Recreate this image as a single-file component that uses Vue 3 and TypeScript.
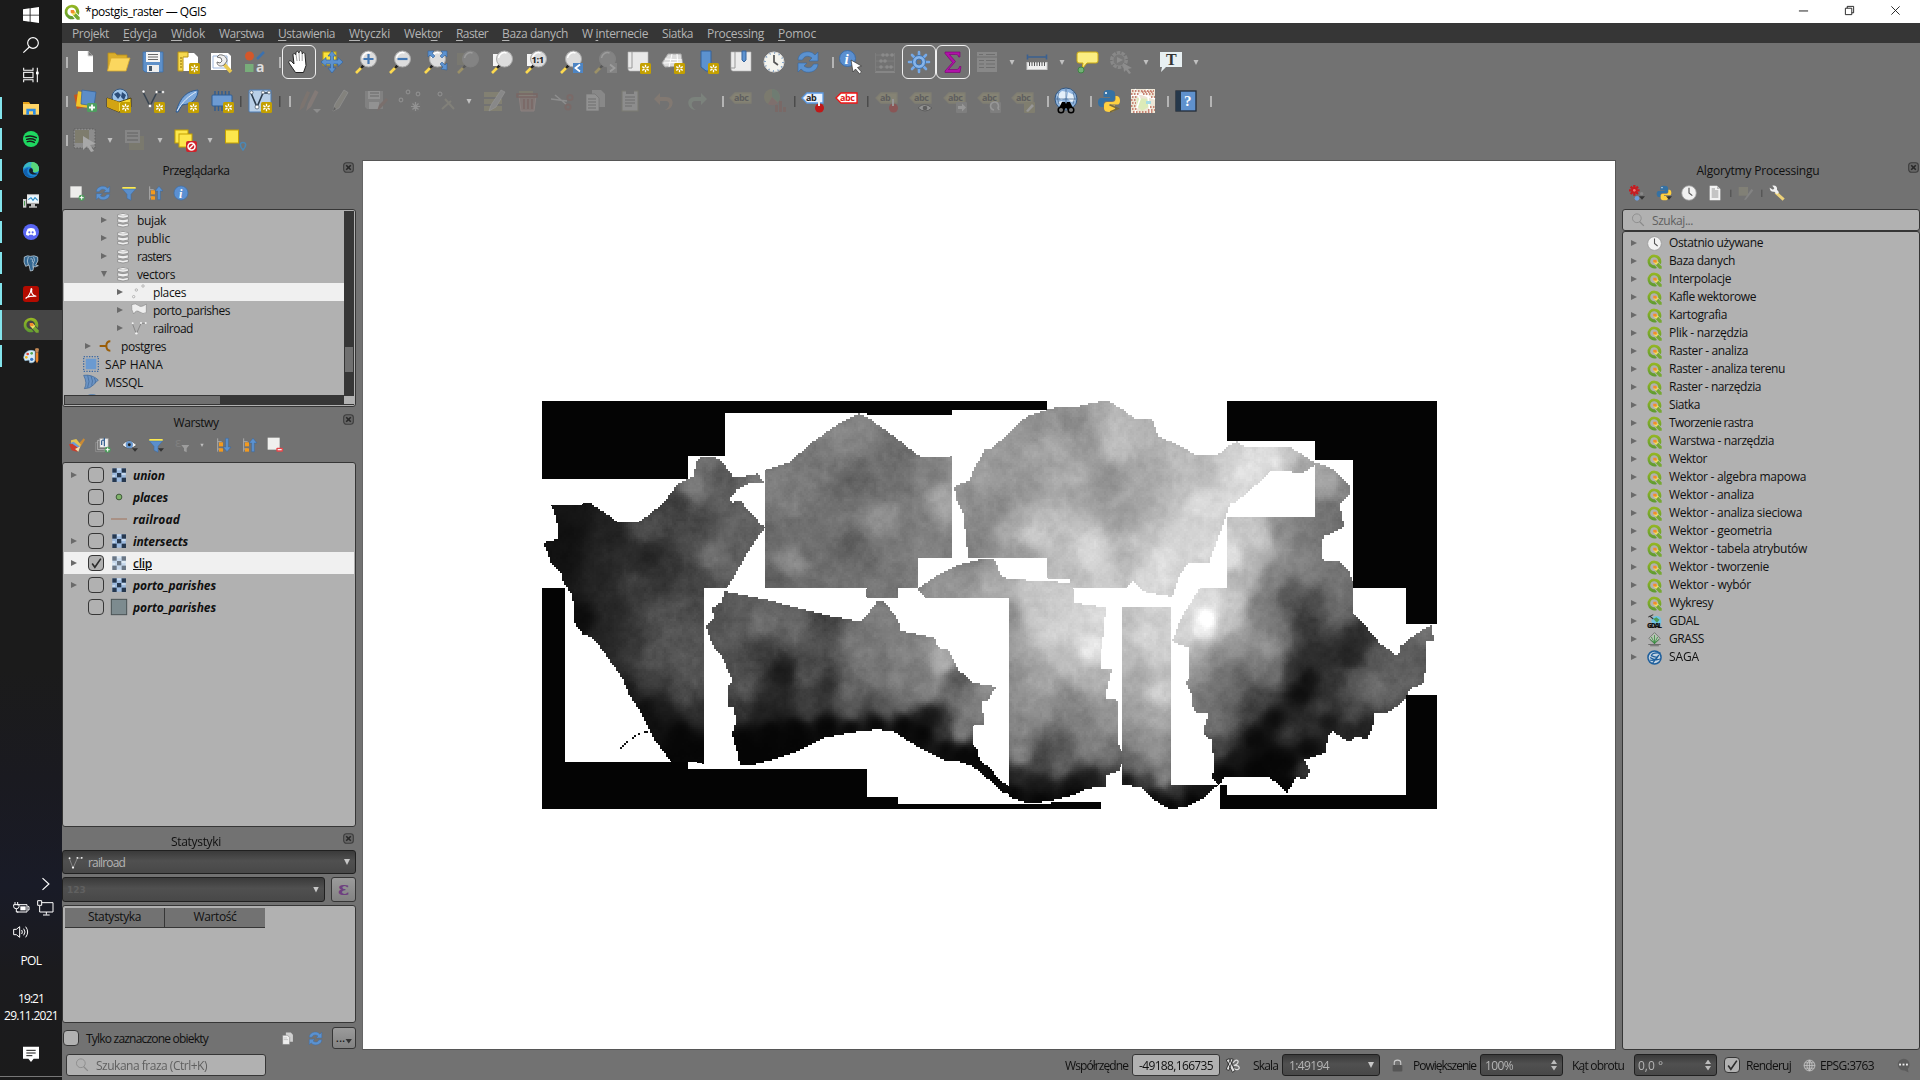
<script setup lang="ts">
import { onMounted, ref } from 'vue'
import type { Directive } from 'vue'

/* Tightens or loosens tracking so that a label takes the given width */
const vFit: Directive<HTMLElement, number> = {
  mounted(el, { value }) {
    const chars = (el.textContent || '').trim().length
    if (!value || !chars) return
    const natural = el.getBoundingClientRect().width
    el.style.letterSpacing = `${((value - natural) / chars).toFixed(3)}px`
  },
}

/* ---------- icons ---------- */
const star = (x = 13, y = 13) =>
  `<g transform="translate(${x} ${y})"><rect width="11" height="11" rx="1.5" fill="#c4a000"/><g stroke="#fff" stroke-width="1.3"><path d="M5.5 1.8v7.4M2.2 3.6l6.6 3.8M8.8 3.6L2.2 7.4"/></g><circle cx="5.5" cy="5.5" r="1.3" fill="#c4a000"/></g>`
const lens = (inner = '', fill = '#dcdcdc') =>
  `<path d="M2 23l5.5-5.5" stroke="#fcd94f" stroke-width="2.6"/><path d="M7 18l2.6-2.6" stroke="#222" stroke-width="2.4"/><circle cx="14.5" cy="9" r="8" fill="${fill}" stroke="#a9a9a9" stroke-width="1"/><path d="M8.5 8a6 6 0 0 1 8-5" stroke="#fff" stroke-width="1.5" fill="none"/>${inner}`
const sync =
  '<path d="M2 10C2 4 9 0 16 2.500L19 5l3-3v9h-9l3-3c-4-3-8-2-9.500 2z" fill="#5b92d0" stroke="#3566a0" stroke-width=".6"/><path d="M22 14c0 6-7 10-14 7.500L5 19l-3 3v-9h9l-3 3c4 3 8 2 9.500-2z" fill="#5b92d0" stroke="#3566a0" stroke-width=".6"/>'
const tag = (t: string, fill: string, line: string, col: string) =>
  `<path d="M1 9l5-5h16v10H6z" fill="${fill}" stroke="${line}" stroke-width="1.3"/><text x="5" y="12" font-family="Open Sans, sans-serif" font-weight="700" font-size="9" letter-spacing="-.4" fill="${col}">${t}</text>`
const pin = '<circle cx="18.500" cy="19" r="4.500" fill="#c01818"/><path d="M18 17V10" stroke="#eee" stroke-width="2"/>'
const python =
  '<path d="M12 1c-5 0-5.500 2-5.500 4v3H13v1H4C1.500 9 1 11.500 1 13.500S2 18 4 18h2.500v-3c0-2 1.500-3 3.500-3h5c2 0 3-1.500 3-3V5c0-3-2-4-6-4z" fill="#3571a3"/><path d="M12.500 23c5 0 5.500-2 5.500-4v-2.500h-6v-1h8.500c2 0 2.500-2 2.500-4S22 7 20 7h-1.500v3c0 2-1.500 3-3.500 3h-5c-2 0-3 1.500-3 3v3.500c0 2.500 2 3.500 5.500 3.500z" fill="#ffd040"/><circle cx="9" cy="4" r="1" fill="#fff"/>'
const funnel = '<path d="M2 3h20v3H2z" fill="#fce94f"/><path d="M2 6h20l-7 8v9l-6-3v-6z" fill="#5b8fcb" stroke="#3d6ca5" stroke-width=".8"/>'
const tri = '<path d="M15 17h9l-4.500 5z" fill="#333"/>'
const tree =
  '<path d="M4 2v20M4 7h6M4 18h6" stroke="#aaa" stroke-width="1.500" fill="none"/><rect x="6" y="8" width="6" height="6" fill="#f39a1e"/><rect x="6" y="17" width="6" height="5" fill="#f39a1e"/>'
const clock =
  '<circle cx="12" cy="12" r="11" fill="#f1f1f1" stroke="#9a9a9a" stroke-width="1.300"/><path d="M12 4v8l5 4" fill="none" stroke="#555" stroke-width="1.700"/>'
const qgis =
  '<defs><linearGradient id="qg" x1="0" y1="0" x2="0" y2="1"><stop offset="0" stop-color="#98b822"/><stop offset="1" stop-color="#5c9a32"/></linearGradient></defs><path d="M12 1a11 11 0 1 0 4 21.200L12.500 18A6.500 6.500 0 1 1 18 12.500l4 4A11 11 0 0 0 12 1z" fill="url(#qg)"/><path d="M14 13l3.500.500L23.500 20v3.500h-4L13.500 17z" fill="#76a832"/><path d="M10.500 9.500h4l4 4-4 4-4-4z" fill="#f0e064"/><path d="M10 9h5l1 4-2 1-4-1z" fill="#f08c2e"/>'
const rasterIcon = (a: string, b: string, c: string) => {
  let s = `<rect x="2" y="2" width="20" height="20" fill="${b}"/>`
  const dark = ['0,0', '1,1', '2,0', '0,2', '2,2']
  dark.forEach((d) => {
    const [x, y] = d.split(',').map(Number)
    s += `<rect x="${2 + x * 7}" y="${2 + y * 7}" width="6.500" height="6.500" fill="${a}"/>`
  })
  return s + `<path d="M9 2h6v3H9zM2 12h4v3H2zM16 9h6v3h-6z" fill="${c}"/>`
}

const icons: Record<string, string> = {
  sep: '<rect x="1" y="7" width="2" height="11" fill="#b4b4b4"/>',
  sepd: '<rect x="1" y="7" width="1.500" height="11" fill="#4b4b4b"/>',
  arrow: '<path d="M1.500 10h5L4 15z" fill="#c0c0c0"/>',
  newfile: '<path d="M5 1h10l5 5v16H5z" fill="#fff"/><path d="M15 1l5 5h-5z" fill="#777"/><path d="M15 1v5h5" fill="none" stroke="#ddd"/>',
  open: '<path d="M2 21V3h7l2 2h10v4" fill="#d9ae2b" stroke="#b88d1a" stroke-width=".800"/><path d="M1.500 21L5 8h19l-4 13z" fill="#fbd75f" stroke="#d8a92d" stroke-width=".800"/>',
  save: '<path d="M2 2h20v20H4l-2-2z" fill="#5e90c9" stroke="#3e6fa9" stroke-width=".800"/><rect x="5" y="2" width="14" height="10" fill="#f4f4f4"/><path d="M7 4.500h10M7 7h10M7 9.500h10" stroke="#666" stroke-width="1.200"/><rect x="6" y="15" width="12" height="7" fill="#eee"/><rect x="8" y="16" width="3" height="5" fill="#456"/>',
  layout: `<path d="M4 3h14l4 4v14H4z" fill="#fff"/><path d="M2 2h10v5H7v14H2z" fill="#f6d94e" stroke="#b99312"/><path d="M4 8h2M4 11h2M4 14h2M4 17h2" stroke="#8a6c08"/>${star()}`,
  layouts: '<path d="M1 3h17l3 3v14H1z" fill="#fff"/><path d="M3 6h14v12H3z" fill="none" stroke="#9db7dd"/><path d="M12 12l9 10" stroke="#e9c84e" stroke-width="3.500"/><path d="M7 7l4 1 1 3-2 2-3-1c0 4 4 5 7 3l3-4c0-4-4-7-8-6z" fill="#eee" stroke="#666" stroke-width=".900"/>',
  style: '<circle cx="6.500" cy="6" r="4.500" fill="#d4572a"/><path d="M14 9l7-7" stroke="#3c71ae" stroke-width="2.500"/><rect x="2" y="14" width="8.500" height="8" fill="#78ad7a"/><text x="13" y="22" font-family="Open Sans, sans-serif" font-weight="700" font-size="14" fill="#ddd">a</text>',
  hand: '<path d="M8.500 22.500L2 13c-1-2 1-3 2.500-1.500L7 14 6 5c0-2 2.300-2 2.500 0L9 3c0-2.500 2.800-2 2.800 0l.400-1c.500-2 2.800-1.500 2.800.500l.300 1.500c.500-2 2.700-1.500 2.700.500l1 11-2.500 7z" fill="#fff" stroke="#222" stroke-width="1"/><path d="M9 4l1 7M12 3l.500 8M15.200 4v7" stroke="#888" stroke-width=".800"/>',
  pan: '<rect x="3" y="2" width="13" height="13" fill="#fbe33c" stroke="#bd9d0b"/><path d="M12 1l4 5h-2.500v4H18V7.500l5 4.500-5 4.500V14h-4.500v4H16l-4 5-4-5h2.500v-4H6v2.500L1 12l5-4.500V10h4.500V6H8z" fill="#5c92d0" stroke="#34639b" stroke-width=".700"/>',
  zin: lens('<path d="M14.500 4v10M9.500 9h10" stroke="#4478b4" stroke-width="2.200"/>'),
  zout: lens('<path d="M9.500 9h10" stroke="#4478b4" stroke-width="2.200"/>'),
  zfull: lens('<path d="M5 1h6l-2 2 3 3-2 2-3-3-2 2zM24 1h-6l2 2-3 3 2 2 3-3 2 2zM24 20v-7l-2 2-3-3-2 2 3 3-2 2z" fill="#5c92d0" stroke="#34639b" stroke-width=".600"/>'),
  zsel: '<rect x="1" y="3" width="10" height="12" fill="#8c876c"/>' + lens('', '#aaa'),
  zlay: '<path d="M3 4h8v12H3z" fill="#f5f5f5"/>' + lens(),
  znat: '<path d="M3 4h8v12H3z" fill="#f5f5f5"/>' + lens('<text x="7.500" y="12.500" font-family="Open Sans, sans-serif" font-weight="700" font-size="9.500" letter-spacing="-.5" fill="#222">1:1</text>'),
  zlast: lens('<rect x="14" y="13" width="10" height="10" fill="#4d85c4"/><path d="M21 14.500l-4.500 3.500 4.500 3.500" stroke="#fff" stroke-width="1.800" fill="none"/>'),
  znext: lens('<rect x="14" y="13" width="10" height="10" fill="#aaa"/><path d="M17 14.500l4.500 3.500-4.500 3.500" stroke="#fff" stroke-width="1.800" fill="none"/>', '#aaa'),
  newmap: `<path d="M1 2h20v19H3c-2 0-2-3-2-3z" fill="#e9e9e9" stroke="#bbb" stroke-width=".600"/><path d="M5 2v16H1" fill="none" stroke="#999"/>${star()}`,
  new3d: `<path d="M7 4h13l2 12-18 1-3-4z" fill="#dcdcdc" stroke="#aaa"/><path d="M4 9l17 1M3 13l18-1M11 4L8 17M16 4l1 12" stroke="#fff"/>${star()}`,
  bookmark: `<path d="M6 1h10v20h-5l-5-4z" fill="#5c92d0" stroke="#34639b"/>${star()}`,
  bookmarks: '<path d="M2 2h20v19H4c-2 0-2-3-2-3z" fill="#ececec" stroke="#bbb" stroke-width=".600"/><path d="M6 2v16H2" fill="none" stroke="#999"/><path d="M13 1h4v9l-2 2-2-2z" fill="#5c92d0" stroke="#34639b"/>',
  clock: '<circle cx="12" cy="12" r="10" fill="#f4f4ee" stroke="#d8d8d8"/><circle cx="12" cy="12" r="9" fill="none" stroke="#678fbc" stroke-width="1.500" stroke-dasharray="1 3.700"/><path d="M12 5v7l4 3" fill="none" stroke="#555" stroke-width="1.700"/>',
  sync,
  info: '<circle cx="8.500" cy="8.500" r="8" fill="#5b8fd0" stroke="#3d6ca5"/><text x="5.500" y="14" font-family="Liberation Serif, serif" font-style="italic" font-weight="700" font-size="15" fill="#fff">i</text><path d="M12 10l10.500 6-4 1.500 4 4.500-2 1.800-4-4.800-2.500 3z" fill="#fff" stroke="#333" stroke-width=".700"/>',
  abacus: '<path d="M2 22h20" stroke="#ccc" stroke-width="1.500"/><path d="M3 5h18M3 11h18M3 17h18M2.500 3v19M21.500 3v19" stroke="#999" stroke-width="1"/><g fill="#c4c4c4"><circle cx="10" cy="5" r="1.800"/><circle cx="14" cy="5" r="1.800"/><circle cx="19" cy="5" r="1.800"/><circle cx="8" cy="11" r="1.800"/><circle cx="12" cy="11" r="1.800"/><circle cx="8" cy="17" r="1.800"/><circle cx="14" cy="17" r="1.800"/><circle cx="18" cy="17" r="1.800"/></g>',
  gear: '<g stroke="#75a9e8" stroke-width="2.600" stroke-linecap="round"><path d="M12 2v20M2 12h20M5 5l14 14M19 5L5 19"/></g><circle cx="12" cy="12" r="6.500" fill="#86b4ea" stroke="#3e74b4"/><circle cx="12" cy="12" r="3" fill="#727272" stroke="#3e74b4"/>',
  sigma: '<path d="M4 2h15v5h-1.500c0-2-1-2.500-3-2.500H8.500l6 7-7 8H15c2 0 3-.500 3.500-3H20l-1 6H4v-1.500l7.500-8.500L4 3.500z" fill="#b012a8" stroke="#77006f" stroke-width=".600"/>',
  table: '<rect x="2" y="2" width="20" height="20" fill="#bbb"/><path d="M2 7h20M4 10.500h5M11 10.500h9M4 14h5M11 14h9M4 17.500h5M11 17.500h9M4 4.500h4M11 4.500h9" stroke="#666" stroke-width="1.200"/>',
  ruler: '<path d="M2.500 7h19M2.500 4.500v5M21.500 4.500v5" stroke="#3a6090" stroke-width="1.600"/><rect x="2" y="12.500" width="20" height="7" fill="#f0f0f0" stroke="#ccc"/><path d="M4.500 12v4M7 12v4M9.500 12v4M12 12v4M14.500 12v4M17 12v4M19.500 12v4" stroke="#555"/>',
  tip: '<path d="M4 2h17q2 0 2 2v7q0 2-2 2H12l-5 6 1-6H4q-2 0-2-2V4q0-2 2-2z" fill="#fbee82" stroke="#cbaa10"/><circle cx="6" cy="20" r="3" fill="#72b276" stroke="#3e8543"/>',
  action: '<circle cx="10" cy="10" r="7.500" fill="none" stroke="#bbb" stroke-width="3" stroke-dasharray="3.500 1.200"/><circle cx="10" cy="10" r="6" fill="#888" stroke="#bbb"/><path d="M8 7l6 3-6 3z" fill="#ccc"/><path d="M14 13l9 5-4 1 3 4-2 1-3-4-2 2z" fill="#ccc"/>',
  textnote: '<path d="M1 2h22v15H7l-5 5 1-5H1z" fill="#e8f0f2"/><text x="7" y="15" font-family="Liberation Serif, serif" font-weight="700" font-size="16" fill="#333">T</text>',
  addlay: '<path d="M1 6l11-3 3 14-11 3z" fill="#c6561d"/><path d="M4 3h11v15H4z" fill="#f0c52b" transform="rotate(8 9 10)"/><path d="M9 1l14 2-2 14L8 15z" fill="#5c8dc8" stroke="#34639b" stroke-width=".700"/><rect x="14" y="14" width="10" height="9" rx="1.500" fill="#4f9e60"/><path d="M19 15.500v6M16 18.500h6" stroke="#fff" stroke-width="1.800"/>',
  geopkg: `<circle cx="13" cy="8" r="8" fill="#9fc4e8" stroke="#34567d"/><path d="M7 5l4-2 3 3-3 4zM15 3l4 3-2 5-3-3z" fill="#2c4d78"/><path d="M0 9l12 4 12-4v9l-12 5-12-5z" fill="#f4d733" stroke="#3a2c00" stroke-width=".800"/><path d="M0 9l12 4v10L0 18z" fill="#d2a414"/>${star()}`,
  newshp: `<path d="M2 3l7 14L16 3h6" fill="none" stroke="#3a4652" stroke-width="1.600"/><g fill="#fff" stroke="#666" stroke-width=".600"><circle cx="2.500" cy="2.500" r="1.500"/><circle cx="9" cy="17" r="1.700"/><circle cx="15.500" cy="3" r="1.500"/><circle cx="22" cy="3" r="1.500"/></g>${star()}`,
  feather: `<path d="M1 23C5 8 12 2 23 1c0 8-5 14-16 15L3 23z" fill="#7da9dc" stroke="#2f5c92"/><path d="M2 22C8 12 14 7 21 3" stroke="#e4eefa" fill="none"/>${star()}`,
  memory: `<g stroke="#2f5c92" stroke-width="1.400"><path d="M5 2v20M8.500 2v20M12 2v20M15.500 2v20M19 2v20"/></g><rect x="2" y="6" width="20" height="11" rx="1" fill="#6d9bd3" stroke="#2f5c92"/>${star()}`,
  virt: `<rect x="1" y="1" width="22" height="22" rx="1" fill="#b9d0e8" stroke="#4c7db5"/><path d="M3 4l6 14L15 4h5" fill="none" stroke="#2c3c4c" stroke-width="1.600"/><g fill="#fff" stroke="#456" stroke-width=".700"><circle cx="3.500" cy="3.500" r="1.600"/><circle cx="9" cy="18" r="2"/><circle cx="15" cy="3.500" r="1.600"/><circle cx="21" cy="3.500" r="1.600"/></g>${star()}`,
  pencils: '<path d="M2 22l2-7L10 2l3 1.500L7 18z" fill="#96796b"/><path d="M9 22l2-7L18 1l3.500 2L14 18z" fill="#ac8f84"/><path d="M16 20h8l-4 4z" fill="#ccc"/>',
  pencil: '<path d="M3 22l2-7L14 1l4 2.500L9 19z" fill="#aba898" stroke="#ddd" stroke-width=".700"/><path d="M3 22l1-4 2 2z" fill="#333"/>',
  saveedit: '<path d="M1 2h18v18H3l-2-2z" fill="#a6a6a6"/><rect x="4" y="2" width="12" height="8" fill="#ddd"/><rect x="5" y="13" width="10" height="7" fill="#ddd"/><path d="M6 4h9M6 7h9" stroke="#555"/><path d="M13 22l2-6 7-7 2 2-7 8z" fill="#8d6a60"/>',
  addpt: '<g fill="none" stroke="#ccc" stroke-width="1.200"><circle cx="3" cy="11" r="1.800"/><circle cx="10" cy="3" r="1.800"/><circle cx="20" cy="5" r="1.800"/></g><rect x="12" y="12" width="11" height="11" fill="#777"/><g stroke="#ddd" stroke-width="1.200"><path d="M17.500 13v9M13 17.500h9M14.500 14.500l6 6M20.500 14.500l-6 6"/></g>',
  vertex: '<path d="M3 22l5-16 14 2" fill="none" stroke="#777" stroke-dasharray="2 1"/><circle cx="8" cy="5" r="2" fill="none" stroke="#ddd"/><path d="M10 20l9-8M13 10l9 10" stroke="#a5a28c" stroke-width="2"/>',
  multi: '<path d="M1 3h18v5H1zM1 10h18v5H1zM1 17h18v5H1z" fill="#a8a274"/><path d="M6 22l2-6L18 1l4 2-9 15z" fill="#bbb" stroke="#eee" stroke-width=".600"/>',
  trash: '<path d="M3 2h14v5H3z" fill="#9c956c"/><path d="M3 7h17l-2 15H5z" fill="#a6837c" stroke="#c7a4a0"/><path d="M1 5h20v3H1zM8 10v10M12 10v10M16 10v10" stroke="#8b4c45" stroke-width="1.400" fill="none"/>',
  cut: '<path d="M0 10l16 2M4 6l12 10" stroke="#ccc" stroke-width="1.600"/><g fill="none" stroke="#8d5a54" stroke-width="2"><circle cx="19" cy="8.500" r="2.600"/><circle cx="17" cy="18" r="2.600"/></g>',
  copy: '<path d="M9 1h9l4 4v13H9z" fill="#bbb"/><path d="M3 5h9l4 4v13H3z" fill="#ddd" stroke="#777" stroke-width=".700"/><path d="M5 10h8M5 13h8M5 16h8M5 19h8" stroke="#666"/>',
  copyb: '<path d="M9 1h9l4 4v13H9z" fill="#d0d0d0"/><path d="M3 6h9l4 4v13H3z" fill="#eee" stroke="#777" stroke-width="1"/><path d="M5 11h6M5 14h8" stroke="#aaa"/>',
  paste: '<rect x="4" y="2" width="16" height="20" fill="#ccc" stroke="#8e8e72"/><rect x="8" y="1" width="8" height="4" fill="#777"/><path d="M7 8h10M7 11h10M7 14h10M7 17h7" stroke="#666"/>',
  undo: '<path d="M8 4L2 10l6 6v-4h6c4 0 5 6-1 9 9 0 11-13 1-13H8z" fill="#a98c74"/>',
  redo: '<path d="M16 4l6 6-6 6v-4h-6c-4 0-5 6 1 9C2 21 0 8 10 8h6z" fill="#93a894"/>',
  tagdis: tag('abc', '#b1ab7b', '#a09a74', '#333'),
  diagram: '<circle cx="9" cy="8" r="8" fill="#918f68"/><path d="M9 8V0a8 8 0 0 1 6 13z" fill="#6b9575"/><path d="M9 8l6 6a8 8 0 0 1-10 1z" fill="#9a6a63"/><path d="M12 16h3v7h-3zM16 12h3v11h-3zM20 18h3v5h-3z" fill="#8c5550"/>',
  tagpin: tag('ab', '#e8f2ff', '#5c9be4', '#222') + pin,
  tagred: tag('abc', '#fff', '#f01515', '#e31818'),
  tagpind: tag('ab', '#b1ab7b', '#a09a74', '#333') + pin,
  tageye: tag('abc', '#b1ab7b', '#a09a74', '#333') + '<path d="M9 19q6-7 14 0-7 6-14 0z" fill="#ddd" stroke="#333"/><circle cx="16" cy="19" r="2.300" fill="#333"/>',
  tagmove: tag('abc', '#b1ab7b', '#a09a74', '#333') + '<rect x="13" y="13" width="11" height="11" rx="1" fill="#9a9a9a"/><path d="M15 17h4v-2.500l4 4-4 4V20h-4z" fill="#eee"/>',
  tagrot: tag('abc', '#b1ab7b', '#a09a74', '#333') + '<rect x="13" y="13" width="11" height="11" rx="1" fill="#9a9a9a"/><path d="M17 21a4 4 0 1 1 4-2l1 2" fill="none" stroke="#eee" stroke-width="1.600"/>',
  tagedit: tag('abc', '#b1ab7b', '#a09a74', '#333') + '<rect x="13" y="13" width="11" height="11" rx="1" fill="#a39b6b"/><path d="M15 22l6-7 2 2-6 6z" fill="#eee"/>',
  metasearch: '<circle cx="12" cy="10" r="11" fill="#8fb4de" stroke="#32567f"/><path d="M3 6l5-4 5 1-1 6-5 2zM14 3l6 3 1 6-4 1-4-4zM4 13l4-1 2 3-3 2z" fill="#e5f0fa"/><path d="M1 10h22M12 0v16M5 3q-3 7 0 12M19 3q3 7 0 12" fill="none" stroke="#44658c" stroke-width=".700"/><path d="M8 13h3l1 2 1-2h3l4 8h-6l-2-2-2 2H4z" fill="#000"/><circle cx="7" cy="21" r="2.800" fill="#777" stroke="#000" stroke-width="1.500"/><circle cx="17" cy="21" r="2.800" fill="#777" stroke="#000" stroke-width="1.500"/>',
  python: python + '<path d="M13 16l8 3.500-8 3.500" fill="none" stroke="#77693b" stroke-width="1.500"/>',
  osm: '<rect width="24" height="24" fill="#eee6d6"/><path d="M6 9l12 1 1 7-8 5-5-5z" fill="#dcebb8"/><path d="M0 7l10-2 14 5M4 0l5 10-5 14M16 0l3 24" stroke="#fff" stroke-width="1.600" fill="none"/><path d="M15 12h5v3h-5z" fill="#a5dce4"/><g stroke="#c98575" stroke-width="1.800" stroke-dasharray="1.500 1.500" fill="none"><path d="M1 2h22M0 5h9M12 5h11M1 8h6M0 11h5M1 14h4M0 17h5M1 20h5M19 18h5M17 21h7M2 23h20M11 3h12M20 8h4"/></g>',
  help: '<rect x="2" y="2" width="20" height="20" fill="#5f91cd" stroke="#222c38" stroke-width="1.300"/><rect x="2" y="2" width="5" height="20" fill="#26384b"/><text x="10" y="17" font-family="Liberation Serif, serif" font-weight="700" font-size="15" fill="#fff">?</text>',
  select: '<rect x="1" y="1" width="21" height="19" fill="#a0a0a0" stroke="#555" stroke-dasharray="1.500 1.500"/><rect x="2" y="2" width="14" height="13" fill="#87836a"/><path d="M10 8l13 8-6 1 4 6-3 1-4-6-4 4z" fill="#ccc"/>',
  form: '<rect x="6" y="8" width="15" height="14" fill="#8d8967"/><rect x="2" y="2" width="15" height="13" fill="#b5b5b5"/><path d="M4 5h11M4 8h11M4 12h11" stroke="#666" stroke-width="1.500"/>',
  desel: '<rect x="1" y="2" width="13" height="13" fill="#fde74c" stroke="#c4a000"/><rect x="5" y="6" width="13" height="13" fill="#fde74c" stroke="#c4a000"/><rect x="12" y="13" width="11" height="11" rx="2" fill="#d0222a"/><circle cx="17.500" cy="18.500" r="3.500" fill="none" stroke="#fff" stroke-width="1.500"/><path d="M15 21l5-5" stroke="#fff" stroke-width="1.500"/>',
  selloc: '<rect x="2.500" y="2" width="13" height="13" fill="#fde74c" stroke="#c4a000"/><path d="M20 22c-4-5-3-7.500 0-7.500s4 2.500 0 7.500z" fill="none" stroke="#4b88b5" stroke-width="1.500"/>',
  addl: '<rect x="2" y="2" width="17" height="17" fill="#ededeb"/><circle cx="19" cy="19" r="4.500" fill="#4c9a5b"/><path d="M19 16v6M16 19h6" stroke="#fff" stroke-width="1.500"/>',
  funnel, funnelt: funnel + tri,
  collapse: tree + '<path d="M16 22V9h-4l6-7 6 7h-4v13z" fill="#5c92d0" stroke="#34639b" stroke-width=".700"/>',
  expand: tree + '<path d="M16 2v13h-4l6 7 6-7h-4V2z" fill="#5c92d0" stroke="#34639b" stroke-width=".700"/>',
  infos: '<circle cx="12" cy="12" r="10.500" fill="#5b90d2" stroke="#3d6ca5"/><text x="9" y="19" font-family="Liberation Serif, serif" font-style="italic" font-weight="700" font-size="18" fill="#fff">i</text>',
  brush: '<path d="M12 13L22 2l2 2-8 13z" fill="#c98a35"/><path d="M3 5l8-2 7 9-4 4L3 9z" fill="#e3c455"/><path d="M2 9l5-2 10 8-3 3z" fill="#6d9dd6"/><path d="M0 11l5-1 11 8-4 4-8-2z" fill="#c93e2d"/><path d="M9 18l8-4-3 8z" fill="#f6dfaa"/>',
  group: '<path d="M1 8h13v14H1z" fill="none" stroke="#999"/><path d="M4 5h14v14H4z" fill="#777" stroke="#ccc"/><path d="M7 2h13v14H7z" fill="#f0f0f0" stroke="#888"/><path d="M14 14V1M10 12V6q2-3 4 0" fill="none" stroke="#2d5a8e" stroke-width="1.800"/><circle cx="19" cy="19" r="4.500" fill="#4c9a5b"/><path d="M19 16v6M16 19h6" stroke="#fff" stroke-width="1.500"/>',
  eye: '<path d="M0 12Q10 0 22 12 11 22 0 12z" fill="#f2f2f2" stroke="#444"/><circle cx="11" cy="11.500" r="5.500" fill="#6796cd"/><circle cx="11" cy="11.500" r="2.200" fill="#222"/>' + tri,
  exprf: '<text x="1" y="15" font-family="DejaVu Sans, sans-serif" font-size="19" fill="#888">ε</text><path d="M11 12h12l-4 5v6l-4-2v-4z" fill="#bbb"/>',
  rem: '<rect x="1" y="1" width="18" height="18" fill="#f0f0ee"/><rect x="14" y="16" width="10" height="6" rx="1.500" fill="#e6474b"/><path d="M16 19h6" stroke="#fff" stroke-width="1.700"/>',
  db: '<g fill="#f0f0f0" stroke="#888" stroke-width="1.200"><path d="M4 17v4q8 3 16 0v-4q-8 3-16 0z"/><path d="M4 10v5q8 3 16 0v-5q-8 3-16 0z"/><path d="M4 4v4q8 3 16 0V4Q12 0 4 4z"/></g><path d="M5 4.500q7 3 14 0" fill="none" stroke="#bbb"/>',
  pts: '<g fill="#f4f4f4" stroke="#aaa" stroke-width="1.300"><circle cx="4" cy="19" r="1.800"/><circle cx="8" cy="9" r="1.800"/><circle cx="18" cy="3" r="1.800"/></g>',
  poly: '<path d="M1 4q6-3 10 1t12-2v13q-5 3-10-1T4 18Q0 12 1 4z" fill="#eee" stroke="#888"/>',
  line: '<path d="M2 5l6 16L15 5h7" fill="none" stroke="#888" stroke-width="1.500"/><g fill="#f4f4f4"><circle cx="2.500" cy="5" r="1.500"/><circle cx="8" cy="20" r="1.800"/><circle cx="15" cy="4.500" r="1.500"/><circle cx="22" cy="4.500" r="1.500"/></g>',
  plug: '<path d="M1 12h10M17 5q-6 0-6 7t6 7" fill="none" stroke="#9a5d07" stroke-width="3"/>',
  hana: '<rect x="1" y="1" width="22" height="22" fill="none" stroke="#3c6aa5" stroke-width="2" stroke-dasharray="2 2"/><rect x="4" y="4" width="16" height="16" fill="#6b9ad0"/>',
  mssql: '<path d="M1 2q12-2 22 7-4 4-7 7-5 6-14 6 5-8-1-20z" fill="#6b93c4" stroke="#3c6594"/><path d="M7 2q4 10 0 18M12 3q4 8 1 14M17 6q3 5 1 8" fill="none" stroke="#3c6594"/>',
  ras: rasterIcon('#26384f', '#9dbbe0', '#c6d9ee'),
  rasl: rasterIcon('#6b7785', '#c6d8ec', '#dfeaf4'),
  dot: '<circle cx="12" cy="12" r="4.300" fill="#7fb36a" stroke="#40593a" stroke-width="1.500"/>',
  rail: '<path d="M0 12h24" stroke="#a88b7c" stroke-width="2.500"/>',
  fill: '<rect x=".500" y=".500" width="23" height="23" fill="#7d8b8f" stroke="#4a5254" stroke-width="1.500"/>',
  qgis, clocks: clock,
  gdal: '<circle cx="15" cy="11" r="8" fill="#6fc4e4"/><path d="M10 8l5-3 5 4-4 5z" fill="#4f9c55"/><path d="M2 5l8-4M4 3l6 5" stroke="#333" stroke-width="1.700"/><text x="0" y="23" textLength="24" font-family="Open Sans, sans-serif" font-weight="800" font-size="11" fill="#111">GDAL</text>',
  grass: '<path d="M12 1l9 9-9 9-9-9z" fill="#b9c4b5" stroke="#555"/><path d="M12 19V5M12 18L7 8M12 18l5-10M12 18L5 12M12 18l7-6" stroke="#358c3e" stroke-width="1.300"/><path d="M2 20h20M5 22h14" stroke="#555" stroke-width="1.200"/>',
  saga: '<circle cx="12" cy="12" r="10.500" fill="#c4d4e2" stroke="#1d5e9c" stroke-width="2.400"/><path d="M22 5Q9 3 7 9q5 3 10 2-3 7-13 5M5 12q8 6 17 2M19 8L9 21" fill="none" stroke="#1d5e9c" stroke-width="2"/>',
  close: '<rect x="1.500" y="1.500" width="21" height="21" rx="6" fill="#666" stroke="#3c3c3c" stroke-width="2.400"/><path d="M7 7l10 10M17 7L7 17" stroke="#282828" stroke-width="3.500"/>',
  gears: '<g stroke="#c71b20" stroke-width="3.500"><path d="M8 0v16M0 8h16M2.500 2.500l11 11M13.500 2.500l-11 11"/></g><circle cx="8" cy="8" r="2" fill="#e77"/><circle cx="12" cy="20" r="3.500" fill="#6d9ddd"/><circle cx="19" cy="13" r="2.500" fill="#888"/>' + tri,
  pys: python + tri,
  doc: '<path d="M4 1h11l5 5v17H4z" fill="#f2f2f2"/><path d="M15 1v5h5" fill="#bbb"/><path d="M7 9h10M7 12h10M7 15h10M7 18h10M7 6h5" stroke="#888" stroke-width="1.300"/>',
  editm: '<path d="M1 3h14v13H1z" fill="#a5a080"/><path d="M9 22L20 6l3 2-11 14z" fill="#aaa"/>',
  wrench: '<path d="M10 11l12 11" stroke="#edd27a" stroke-width="4.500"/><path d="M1 4l5 3 2-2-3-4c5-1 8 2 7 6l3 4-3 3-4-4C4 11 1 8 1 4z" fill="#f1f1f1"/>',
  mag: '<circle cx="10" cy="9" r="7.500" fill="none" stroke="#8a8a8a" stroke-width="1.500"/><path d="M15 15l7 7" stroke="#8a8a8a" stroke-width="2.200"/>',
  tick: '<path d="M4 12l5 7L20 3" fill="none" stroke="#2c2c2c" stroke-width="3"/>',
  lock: '<path d="M6 11V7q0-5 6-5t6 5v4" fill="none" stroke="#ccc" stroke-width="2"/><rect x="3" y="11" width="18" height="12" rx="2" fill="#555"/>',
  extent: '<path d="M2 3l5-2 9 19-4 3zM9 1l4 1-7 18-4-2z" fill="#ddd" stroke="#222" stroke-width="1.300"/><path d="M13 8q4-7 8-3 0 5-7 7M14 12q8-1 9 4-3 5-8 1" fill="none" stroke="#ddd" stroke-width="2"/>',
  globe: '<circle cx="12" cy="12" r="10" fill="#7a7a7a" stroke="#ccc" stroke-width="1.500"/><path d="M2 12h20M12 2v20M4 7h16M4 17h16M12 2q-10 10 0 20 10-10 0-20" fill="none" stroke="#ccc" stroke-width="1.300"/>',
  bubble: '<path d="M12 1a10 9.500 0 0 1 7 16l1 6-6-3A10 9.500 0 1 1 12 1z" fill="#5c5c5c"/><g fill="#eee"><rect x="5" y="9" width="3" height="3"/><rect x="10.500" y="9" width="3" height="3"/><rect x="16" y="9" width="3" height="3"/></g>',
  win: '<path d="M0 3.500l10-1.500v9.500H0zM11.300 1.800L24 0v11.500H11.300zM0 12.700h10V22L0 20.600zM11.300 12.700H24V24l-12.700-1.800z" fill="#fff"/>',
  search: '<circle cx="15" cy="9" r="8" fill="none" stroke="#fff" stroke-width="1.700"/><path d="M9.500 15L.500 23.500" stroke="#fff" stroke-width="1.800"/>',
  tasks: '<g fill="none" stroke="#fff" stroke-width="1.600"><path d="M1 1v4h14V1M1 23v-4h14v4"/><rect x="1" y="8" width="14" height="8"/><path d="M21.500 1v22"/></g><rect x="19.500" y="7" width="4" height="4" fill="#fff"/>',
  explorer: '<path d="M0 3h9l2 3h13v4H0z" fill="#e6a21b"/><rect y="6" width="24" height="16" fill="#ffd567"/><path d="M5 22v-9h14v9h-4v-5H9v5z" fill="#2d8ce3"/>',
  spotify: '<circle cx="12" cy="12" r="12" fill="#1ed760"/><path d="M4.500 8.500q8-2.500 15.500 1.500M5.500 12.500q7-2 13 1.300M6.500 16q5-1.500 10.500 1.200" fill="none" stroke="#191919" stroke-width="2.200" stroke-linecap="round"/>',
  edge: '<circle cx="12" cy="12" r="12" fill="#1b86d4"/><path d="M0 11C1 4 7 0 12 0c8 0 12 6 12 10 0 5-4 6-9 5 2-7-5-9-10-7-3 1-4 2-5 3z" fill="#3bb8c0"/><path d="M13 0c7 0 11 5 11 10 0 5-4 6-9 5 1-3 0-6-3-7z" fill="#59d77a"/><path d="M8 9c-5 7 2 15 11 12C11 26 1 21 1 14q2-5 7-5z" fill="#1260ae"/><path d="M10 10c-3 5 2 11 12 8-2-1-9-2-7-5-1-4-3-4-5-3z" fill="#1a1f27"/>',
  monitor: '<rect x="6" y="2" width="18" height="14" fill="#e6e6e6"/><rect x="8" y="4" width="14" height="10" fill="#e9f7ff"/><path d="M8 10l4-3 3 4 3-4 4 4" fill="none" stroke="#2689c4" stroke-width="1.600"/><path d="M12 16h6v4h3v2H9v-2h3z" fill="#bbb"/><rect x="0" y="9" width="5" height="13" fill="#ccc"/><rect x="1.500" y="12" width="1.500" height="7" fill="#4d9d50"/>',
  discord: '<circle cx="12" cy="12" r="12" fill="#5865f2"/><path d="M7 7q5-2 10 0 3 5 2.500 9-2 1.500-4 1.500l-1-1.500h-5l-1 1.500q-2 0-4-1.500Q4 12 7 7z" fill="#fff"/><circle cx="9.500" cy="12.500" r="1.600" fill="#5865f2"/><circle cx="14.500" cy="12.500" r="1.600" fill="#5865f2"/>',
  pg: '<path d="M2 3q5-3 9-1 6-2 11 1 2 6-3 12l4 1-5 2-2-1-1 6-4 1-2-9-5 2Q0 11 2 3z" fill="#336791" stroke="#c9d6e0" stroke-width="1.100"/><path d="M8 3q-3 6 0 12M16 3q3 5-1 10v6M11 6q4-2 3 5" fill="none" stroke="#c9d6e0" stroke-width="1.100"/>',
  pdf: '<rect width="24" height="24" rx="4" fill="#b30b00"/><path d="M5 18c2-1 7-8 7-13 0-2 2-1 1 2-1 4 3 8 6 8 2 1-5-1-13 2-2 1-2 2-1 1z" fill="none" stroke="#fff" stroke-width="1.700"/>',
  paint: '<path d="M3 8Q9 1 18 5v13q-1 5-8 4l-1-4-6 1Q-1 15 3 8z" fill="#d9ecf7" stroke="#8db7d3"/><circle cx="7" cy="9" r="2" fill="#db4437"/><circle cx="13" cy="8" r="2" fill="#53a653"/><circle cx="5" cy="14" r="2" fill="#f2b91f"/><circle cx="13" cy="17" r="2.500" fill="#3775c4"/><path d="M18 1l3-1 3 1-1 6h-4z" fill="#c48955"/><path d="M19 7h4v12l-2 4-2-4z" fill="#e8832b"/>',
  chev: '<path d="M6 2l11 10L6 22" fill="none" stroke="#fff" stroke-width="2"/>',
  batt: '<path d="M6 7h15v11H6M22 10h2v5h-2M3 3v4M7 3v4M1 7h8v3q0 3-4 3t-4-3zM5 13v5h3" fill="none" stroke="#fff" stroke-width="1.500"/><rect x="11" y="9.500" width="8" height="6" fill="#fff"/>',
  net: '<path d="M7 4h17v14H4V9M14 18v4M9 22.500h10M1 1h6v7H1z" fill="none" stroke="#fff" stroke-width="1.500"/>',
  vol: '<path d="M1 8h4l5-4v16l-5-4H1z" fill="none" stroke="#fff" stroke-width="1.500"/><path d="M13 9q2 3 0 6M16 7q4 5 0 10M19 4q6 8 0 16" fill="none" stroke="#fff" stroke-width="1.500"/>',
  msg: '<path d="M0 1h24v18h-8l-4 5-4-5H0z" fill="#fff"/><path d="M5 6.500h14M5 10.500h14M5 14.500h9" stroke="#1b1b1b" stroke-width="1.500"/>',
  wmin: '<path d="M2 13h20" stroke="#111" stroke-width="2"/>',
  wmax: '<path d="M3 7h14v14H3zM7 7V3h14v14h-4" fill="none" stroke="#111" stroke-width="1.900"/>',
  wclose: '<path d="M3 3l18 18M21 3L3 21" stroke="#111" stroke-width="1.900"/>',
}

/* ---------- bars: each item is [icon, centre, flag]; gaps follow from the centres ---------- */
type Raw = [string, number, string?]
interface Item { icon: string; w: number; gap: number; flag: string; vb: string }
const place = (raw: Raw[], start: number, size: number): Item[] => {
  let x = start
  return raw.map(([icon, c, flag = '']) => {
    const w = icon === 'arrow' ? 8 : icon.startsWith('sep') ? 4 : size
    const gap = c - w / 2 - x
    x = c + w / 2
    return { icon, w, gap, flag, vb: w === size ? '0 0 24 24' : `0 0 ${w} 24` }
  })
}

const toolbars: Item[][] = [
  place([['sep', 67], ['newfile', 85], ['open', 118], ['save', 153], ['layout', 188], ['layouts', 222], ['style', 255], ['sep', 280], ['hand', 298.5, 'framed'], ['pan', 332], ['zin', 366], ['zout', 400], ['zfull', 435], ['zsel', 468, 'off'], ['zlay', 502], ['znat', 536], ['zlast', 571], ['znext', 605, 'off'], ['newmap', 639], ['new3d', 673], ['bookmark', 707], ['bookmarks', 741], ['clock', 774], ['sync', 808], ['sep', 833], ['info', 851], ['abacus', 885, 'off'], ['gear', 919, 'framed'], ['sigma', 953, 'framed'], ['table', 987, 'off'], ['arrow', 1012], ['ruler', 1037], ['arrow', 1062], ['tip', 1087], ['action', 1121, 'off'], ['arrow', 1146], ['textnote', 1171], ['arrow', 1196]], 62, 24),
  place([['sep', 67], ['addlay', 85], ['geopkg', 119], ['newshp', 153], ['feather', 187], ['memory', 222], ['sepd', 241], ['virt', 260], ['sepd', 280], ['sep', 290], ['pencils', 309, 'off'], ['pencil', 342, 'off'], ['saveedit', 376, 'off'], ['addpt', 410, 'off'], ['vertex', 444, 'off'], ['arrow', 469], ['multi', 495, 'off'], ['trash', 528, 'off'], ['cut', 563, 'off'], ['copy', 595, 'off'], ['paste', 630, 'off'], ['undo', 664, 'off'], ['redo', 697, 'off'], ['sep', 723], ['tagdis', 741, 'off'], ['diagram', 775, 'off'], ['sepd', 795], ['tagpin', 813], ['tagred', 847], ['sepd', 868], ['tagpind', 887, 'off'], ['tageye', 921, 'off'], ['tagmove', 955, 'off'], ['tagrot', 989, 'off'], ['tagedit', 1023, 'off'], ['sep', 1048], ['metasearch', 1066], ['sep', 1091], ['python', 1109], ['osm', 1143], ['sep', 1168], ['help', 1186], ['sep', 1211]], 62, 24),
  place([['sep', 67], ['select', 85, 'dim'], ['arrow', 110], ['form', 135, 'off'], ['arrow', 160], ['desel', 186], ['arrow', 210], ['selloc', 235]], 62, 24),
]
const browserBar = place([['addl', 77], ['sync', 103], ['funnel', 129], ['collapse', 155], ['infos', 181]], 62, 16)
const layersBar = place([['brush', 77], ['group', 103], ['eye', 130], ['funnelt', 156], ['exprf', 182, 'dim'], ['arrow', 202], ['expand', 223], ['collapse', 249], ['rem', 275]], 62, 16)
const procBar = place([['gears', 1637], ['pys', 1664], ['clocks', 1689], ['doc', 1715], ['sepd', 1731], ['editm', 1746, 'off'], ['sepd', 1762], ['wrench', 1777]], 1622, 16)

const menu: [string, number][] = [
  ['Pro<u>j</u>ekt', 37], ['<u>E</u>dycja', 34], ['<u>W</u>idok', 34], ['Wa<u>r</u>stwa', 45], ['<u>U</u>stawienia', 57], ['<u>W</u>tyczki', 41], ['Wekt<u>o</u>r', 38], ['<u>R</u>aster', 32], ['<u>B</u>aza danych', 66], ['W <u>i</u>nternecie', 66], ['Siatka', 31], ['Pro<u>c</u>essing', 57], ['<u>P</u>omoc', 38],
]

const apps = ['explorer', 'spotify', 'edge', 'monitor', 'discord', 'pg', 'pdf', 'qgis', 'paint']

interface Node { t: string; w: number; icon: string; lvl: number; open?: boolean; leaf?: boolean; sel?: boolean }
const browser: Node[] = [
  { t: 'bujak', w: 29, icon: 'db', lvl: 2 },
  { t: 'public', w: 33, icon: 'db', lvl: 2 },
  { t: 'rasters', w: 34, icon: 'db', lvl: 2 },
  { t: 'vectors', w: 38, icon: 'db', lvl: 2, open: true },
  { t: 'places', w: 33, icon: 'pts', lvl: 3, sel: true },
  { t: 'porto_parishes', w: 77, icon: 'poly', lvl: 3 },
  { t: 'railroad', w: 40, icon: 'line', lvl: 3 },
  { t: 'postgres', w: 45, icon: 'plug', lvl: 1 },
  { t: 'SAP HANA', w: 58, icon: 'hana', lvl: 0, leaf: true },
  { t: 'MSSQL', w: 38, icon: 'mssql', lvl: 0, leaf: true },
]
const layers = [
  { t: 'union', w: 32, icon: 'ras', exp: true },
  { t: 'places', w: 35, icon: 'dot', exp: false },
  { t: 'railroad', w: 47, icon: 'rail', exp: false },
  { t: 'intersects', w: 55, icon: 'ras', exp: true },
  { t: 'clip', w: 19, icon: 'rasl', exp: true, on: true },
  { t: 'porto_parishes', w: 83, icon: 'ras', exp: true },
  { t: 'porto_parishes', w: 83, icon: 'fill', exp: false },
]
const algs: [string, number, string?][] = [
  ['Ostatnio używane', 94, 'clocks'], ['Baza danych', 66], ['Interpolacje', 62], ['Kafle wektorowe', 87], ['Kartografia', 58], ['Plik - narzędzia', 79], ['Raster - analiza', 79], ['Raster - analiza terenu', 116], ['Raster - narzędzia', 92], ['Siatka', 31], ['Tworzenie rastra', 84], ['Warstwa - narzędzia', 105], ['Wektor', 38], ['Wektor - algebra mapowa', 137], ['Wektor - analiza', 85], ['Wektor - analiza sieciowa', 133], ['Wektor - geometria', 103], ['Wektor - tabela atrybutów', 138], ['Wektor - tworzenie', 100], ['Wektor - wybór', 82], ['Wykresy', 44], ['GDAL', 30, 'gdal'], ['GRASS', 35, 'grass'], ['SAGA', 30, 'saga'],
]

/* ---------- elevation raster; vertices are in thirds of a pixel ---------- */
const pts = (s: string, dx = 0): number[][] => s.trim().split(/\s+/).map((p) => { const a = p.split(',').map(Number); a[0] += dx; return a })
const E = 1230
const voids = [
  pts('36,33 1551,33 1551,60 1266,60 1266,75 1011,75 1011,69 585,69 585,198 474,198 474,267 36,267'),
  pts('36,594 105,594 105,1116 474,1116 474,1137 1011,1137 1011,1221 1104,1221 1104,1242 1562,1242 1562,1236 1713,1236 1713,1257 36,1257'),
  pts('2091,33 2721,33 2721,702 2628,702 2628,594 2469,594 2469,210 2355,210 2355,153 2091,153'),
  pts('2070,1185 2091,1185 2091,1215 2628,1215 2628,915 2721,915 2721,1257 2070,1257'),
]
const land = [
  pts('64,346 155,346 160,340 182,340 200,352 262,395 325,395 345,384 400,340 440,285 474,267 490,260 500,215 515,200 540,198 570,208 612,262 675,255 680,247 690,260 702,280 660,278 620,300 598,328 605,337 632,334 690,400 705,413 660,475 600,580 590,594 522,594 522,1121 504,1121 500,1116 423,1116 370,1045 335,970 295,910 280,870 225,790 185,740 160,735 135,700 133,660 125,610 100,580 95,550 62,520 55,490 43,465 48,455 84,447 82,400 70,360'),
  pts('268,1076 300,1048 312,1038 328,1030 354,1022 354,1028 330,1032 312,1044 300,1052 270,1080'),
  pts('705,241 775,218 850,155 920,105 985,70 1010,80 1080,130 1175,204 1215,200 1266,198 1266,504 1164,504 1164,594 1104,594 1104,624 1011,624 1011,594 705,594'),
  pts('42,290 90,270 100,240 135,180 160,172 220,115 260,80 320,60 365,48 405,52 430,45 485,33 510,36 550,60 590,90 637,90 655,140 700,158 770,195 830,197 870,165 890,155 920,174 985,170 1045,168 1125,218 1160,228 1195,250 1232,290 1230,310 1200,340 1205,380 1215,410 1150,440 1143,495 1150,510 1200,515 1225,540 1240,580 1240,670 1270,700 1320,760 1375,800 1380,770 1430,730 1475,705 1480,740 1490,748 1455,755 1457,835 1448,885 1410,895 1390,935 1340,970 1305,970 1300,1005 1280,1048 1250,1040 1225,1055 1180,1025 1165,1040 1155,1090 1095,1110 1110,1145 1095,1170 1070,1160 1040,1212 1020,1185 985,1160 860,1158 835,1185 815,1160 825,1140 815,1050 788,1030 805,970 760,965 757,920 738,880 747,865 747,773 697,755 725,680 780,594 861,594 861,381 1125,381 1125,225 1085,252 1045,243 990,243 960,275 890,335 870,340 840,430 805,522 795,516 750,517 720,550 697,620 610,605 577,574 560,594 390,594 390,568 321,565 321,504 85,504 70,370 50,330', E),
  pts('-70,598 0,550 60,524 120,508 165,510 180,550 200,568 320,572 390,580 400,600 400,638 497,652 492,720 484,780 484,836 515,838 500,900 495,930 531,930 535,1060 545,1085 545,1120 537,1143 500,1155 495,1192 440,1195 400,1215 320,1235 260,1240 207,1220 207,624 -45,624', E),
  pts('546,651 693,651 693,1185 835,1185 790,1225 740,1250 690,1257 650,1235 600,1190 546,1185', E),
  pts('583,604 700,627 900,678 995,695 1045,630 1060,632 1105,690 1112,722 1217,745 1222,773 1255,778 1285,840 1330,878 1398,890 1375,930 1358,935 1360,1003 1328,1008 1328,1062 1340,1075 1350,1110 1375,1130 1415,1175 1437,1188 1437,1212 1420,1208 1380,1172 1330,1130 1290,1115 1250,1115 1180,1080 1090,1025 1040,1018 960,1028 880,1045 800,1085 720,1112 660,1127 630,1127 620,1080 605,1030 618,1000 612,950 595,950 592,885 610,875 575,800 550,770 528,710 553,685 545,655 575,635'),
]
const samples = [
  ...pts('100,420,16 130,360,22 250,440,35 350,420,78 350,490,38 540,220,110 560,240,85 490,285,125 440,340,62 500,400,72 620,400,95 560,500,112 620,480,92 500,580,65 400,560,50 200,560,35 100,530,18 150,690,12 240,640,40 320,600,62 400,680,85 500,640,75 220,740,35 300,760,50 370,790,85 460,820,85 340,880,60 460,910,75 500,860,85 400,960,28 500,970,45 370,1010,14 450,1030,6 500,1080,6 450,1090,6 350,960,15 300,900,25'),
  ...pts('740,280,125 985,110,130 930,150,138 800,330,125 900,200,120 1100,200,108 970,270,98 900,400,115 1060,380,145 1250,330,165 1200,250,130 1150,400,120 960,470,98 780,515,138 740,570,95 900,560,112 1100,540,115 1060,610,115 740,430,105 1230,470,130 1080,300,112 850,470,108 1000,540,108'),
  ...pts('620,650,90 700,700,110 800,720,100 880,700,70 1050,680,128 1120,760,130 1000,760,120 1230,820,180 1280,870,90 650,850,75 580,740,88 700,780,60 760,850,25 750,920,40 640,900,88 620,960,55 700,960,35 830,860,82 890,890,45 960,900,105 1100,880,130 960,970,92 1060,960,90 1120,930,110 830,960,60 640,1050,5 720,1030,5 800,1020,5 890,1010,5 960,1010,5 1040,1000,5 1120,1010,5 1180,1030,5 1190,900,130 1200,985,20 1250,1070,6 1240,1030,50 1300,920,115 1290,1030,130 1340,960,130 1300,1090,5 1340,1100,5 1400,1160,5 1370,900,140 700,1090,5 800,1060,5 650,1100,5 1020,840,118 1180,830,128'),
  ...pts('110,260,165 80,300,140 100,450,128 90,490,125 180,200,155 300,110,145 400,90,138 480,60,165 540,80,190 530,160,188 440,160,145 340,160,168 250,300,150 400,250,172 500,270,148 550,380,160 620,240,165 730,210,185 800,250,182 180,350,138 230,400,175 280,440,200 340,400,192 460,490,215 380,550,185 560,490,180 600,460,195 680,500,220 640,560,218 790,355,222 760,400,205 780,470,215 910,250,228 900,310,218 860,220,205 1000,200,225 1050,190,192 1100,225,160 1160,280,165 1220,290,130 1170,370,112 1190,410,110 250,500,150 700,320,185 600,320,165 350,320,165', E),
  ...pts('900,400,200 960,450,200 870,500,225 940,520,178 1020,430,140 1100,440,120 900,570,180 1000,560,130 1100,540,130 1180,540,115 1210,620,112 880,630,200 800,620,218 740,700,212 802,692,275 782,725,250 850,700,190 880,760,150 960,650,125 1050,620,82 1120,650,75 1000,720,120 980,770,148 1100,700,58 1200,660,102 1250,740,40 1230,800,35 1130,790,42 1060,850,48 1000,850,115 950,830,122 780,830,150 850,850,110 830,800,130 900,860,90 800,910,120 880,930,105 840,1000,115 920,960,60 950,930,70 1000,990,12 1080,910,12 1100,870,16 950,1050,10 1050,1030,52 1120,1000,45 1150,960,60 1180,870,55 1160,990,20 1250,880,95 1300,890,112 1370,870,95 1320,800,90 1430,800,90 1450,730,112 1240,970,70 1280,1020,32 1220,1030,38 1100,1080,10 840,1080,70 880,1110,20 860,1150,5 950,1140,5 1040,1190,5 1090,1140,55 1000,1110,6 1050,1120,5 740,745,205 780,775,170', E),
  ...pts('100,580,145 0,590,150 140,590,178 280,610,202 360,620,208 220,680,140 270,680,200 320,730,208 400,690,210 470,680,218 455,780,235 380,800,185 250,790,165 220,850,140 300,880,165 450,860,180 380,940,132 280,950,150 230,1000,135 420,1000,130 500,980,150 360,1060,88 310,1110,68 240,1090,135 450,1080,130 510,1110,125 230,1165,40 300,1190,25 400,1185,20 460,1170,25 520,1145,60 300,1225,4 220,1210,4 400,1210,4 360,1130,98', E),
  ...pts('570,690,190 650,680,208 620,740,218 560,790,190 660,790,205 600,860,165 655,910,210 590,950,160 650,980,165 600,1050,142 650,1090,150 600,1130,120 670,1170,140 560,1165,6 565,1130,95 620,1180,50 700,1205,55 780,1200,22 690,1240,4 640,1220,8 760,1230,4', E),
]

const inside = (poly: number[][], x: number, y: number) => {
  let hit = false
  for (let i = 0, j = poly.length - 1; i < poly.length; j = i++) {
    const [xi, yi] = poly[i]
    const [xj, yj] = poly[j]
    if (yi > y !== yj > y && x < ((xj - xi) * (y - yi)) / (yj - yi) + xi) hit = !hit
  }
  return hit
}

/* long tile cuts stay sharp to the pixel; everything else follows the 2px cells */
const cuts: number[][] = []
land.forEach((poly) => poly.forEach(([x1, y1], i) => {
  const [x2, y2] = poly[(i + 1) % poly.length]
  if ((x1 === x2 || y1 === y2) && Math.abs(x1 - x2) + Math.abs(y1 - y2) > 50) {
    cuts.push([Math.min(x1, x2) - 6, Math.max(x1, x2) + 6, Math.min(y1, y2) - 6, Math.max(y1, y2) + 6])
  }
}))
const nearCut = (u: number, v: number) => cuts.some((c) => u > c[0] && u < c[1] && v > c[2] && v < c[3])

const hash = (x: number, y: number) => {
  const s = Math.sin(x * 127.1 + y * 311.7) * 43758.5453
  return s - Math.floor(s)
}
const smooth = (x: number, y: number) => {
  const ix = Math.floor(x), iy = Math.floor(y)
  const fx = x - ix, fy = y - iy
  const a = hash(ix, iy) * (1 - fx) + hash(ix + 1, iy) * fx
  const b = hash(ix, iy + 1) * (1 - fx) + hash(ix + 1, iy + 1) * fx
  return a * (1 - fy) + b * fy
}
const shade = (u: number, v: number) => {
  let sum = 0, total = 0
  for (const [pu, pv, g] of samples) {
    const d = (pu - u) ** 2 + (pv - v) ** 2 + 700
    const w = 1 / (d * d)
    sum += w * g
    total += w
  }
  const g = sum / total
  const amp = Math.min(1, g / 70)
  const grain = (smooth(u / 38, v / 38) - 0.5) * 12 + (smooth(u / 15 + 9, v / 15) - 0.5) * 14 + (hash(u, v) - 0.5) * 5
  return Math.max(4, Math.min(255, Math.round(g + amp * grain)))
}

const raster = ref<HTMLCanvasElement | null>(null)
onMounted(() => {
  const ctx = raster.value?.getContext('2d')
  if (!ctx) return
  for (let y = 0; y < 408; y += 2) {
    for (let x = 0; x < 896; x += 2) {
      const u = 36 + (x + 1) * 3
      const v = 33 + (y + 1) * 3
      if (nearCut(u, v)) {
        for (let k = 0; k < 4; k++) {
          const px = x + (k & 1), py = y + (k >> 1)
          if (!land.some((p) => inside(p, 37.5 + px * 3, 34.5 + py * 3))) continue
          const g = shade(u, v)
          ctx.fillStyle = `rgb(${g},${g},${g})`
          ctx.fillRect(px, py, 1, 1)
        }
        continue
      }
      if (!land.some((p) => inside(p, u, v))) continue
      const g = shade(u, v)
      ctx.fillStyle = `rgb(${g},${g},${g})`
      ctx.fillRect(x, y, 2, 2)
    }
  }
  ctx.fillStyle = '#040404'
  for (const poly of voids) {
    ctx.beginPath()
    poly.forEach(([u, v]) => ctx.lineTo(Math.round((u - 36) / 3), Math.round((v - 33) / 3)))
    ctx.fill()
  }
})
</script>

<template>
  <div class="screen">
    <aside class="taskbar">
      <div v-for="n in ['win', 'search', 'tasks']" :key="n" class="sys"><svg viewBox="0 0 24 24" v-html="icons[n]" /></div>
      <div class="apps">
        <div v-for="a in apps" :key="a" class="app" :class="{ active: a === 'qgis' }"><svg viewBox="0 0 24 24" v-html="icons[a]" /></div>
      </div>
      <div class="tray">
        <div class="trow end"><svg viewBox="0 0 24 24" v-html="icons.chev" /></div>
        <div class="trow"><svg viewBox="0 0 24 24" v-html="icons.batt" /><svg viewBox="0 0 24 24" v-html="icons.net" /></div>
        <div class="trow"><svg viewBox="0 0 24 24" v-html="icons.vol" /></div>
        <div class="lang"><span v-fit="21">POL</span></div>
        <div class="time"><span v-fit="26">19:21</span><span v-fit="54">29.11.2021</span></div>
        <div class="msg"><svg viewBox="0 0 24 24" v-html="icons.msg" /></div>
      </div>
    </aside>

    <div class="window">
      <header class="title">
        <svg viewBox="0 0 24 24" v-html="icons.qgis" />
        <span v-fit="121">*postgis_raster — QGIS</span>
        <div class="wbtns"><svg v-for="n in ['wmin', 'wmax', 'wclose']" :key="n" viewBox="0 0 24 24" v-html="icons[n]" /></div>
      </header>
      <nav class="menu"><span v-for="m in menu" :key="m[0]" v-fit="m[1]" v-html="m[0]" /></nav>
      <div class="toolbars">
        <div v-for="(bar, i) in toolbars" :key="i" class="bar">
          <svg v-for="(it, k) in bar" :key="k" :class="it.flag" :viewBox="it.vb" :style="{ width: it.w + 'px', marginLeft: it.gap + 'px' }" v-html="icons[it.icon]" />
        </div>
      </div>

      <div class="body">
        <div class="left">
          <section class="browser">
            <div class="dock-title"><span v-fit="67">Przeglądarka</span><svg class="x" viewBox="0 0 24 24" v-html="icons.close" /></div>
            <div class="bar mini">
              <svg v-for="(it, k) in browserBar" :key="k" :class="it.flag" :viewBox="it.vb" :style="{ width: it.w + 'px', marginLeft: it.gap + 'px' }" v-html="icons[it.icon]" />
            </div>
            <div class="box btree">
              <div class="tree-area">
                <div class="rows">
                  <div v-for="n in browser" :key="n.t" class="row" :class="[{ sel: n.sel }, 'l' + n.lvl]">
                    <i class="tw" :class="{ open: n.open, none: n.leaf }" />
                    <svg viewBox="0 0 24 24" v-html="icons[n.icon]" />
                    <span v-fit="n.w">{{ n.t }}</span>
                  </div>
                  <div class="peek" />
                </div>
                <div class="vscroll"><i /></div>
              </div>
              <div class="hscroll"><i /><b /></div>
            </div>
          </section>

          <section class="layers">
            <div class="dock-title"><span v-fit="45">Warstwy</span><svg class="x" viewBox="0 0 24 24" v-html="icons.close" /></div>
            <div class="bar mini">
              <svg v-for="(it, k) in layersBar" :key="k" :class="it.flag" :viewBox="it.vb" :style="{ width: it.w + 'px', marginLeft: it.gap + 'px' }" v-html="icons[it.icon]" />
            </div>
            <div class="box ltree">
              <div v-for="(l, i) in layers" :key="i" class="lrow" :class="{ sel: l.on }">
                <i class="tw" :class="{ none: !l.exp }" />
                <div class="check"><svg v-if="l.on" viewBox="0 0 24 24" v-html="icons.tick" /></div>
                <svg class="lico" viewBox="0 0 24 24" v-html="icons[l.icon]" />
                <span v-fit="l.w">{{ l.t }}</span>
              </div>
            </div>
          </section>

          <section class="stats">
            <div class="dock-title"><span v-fit="50">Statystyki</span><svg class="x" viewBox="0 0 24 24" v-html="icons.close" /></div>
            <div class="combo c1"><svg viewBox="0 0 24 24" v-html="icons.line" /><span v-fit="37">railroad</span><i class="dn" /></div>
            <div class="crow">
              <div class="combo c2"><em>123</em><i class="dn" /></div>
              <div class="btn eps">ε</div>
            </div>
            <div class="box table">
              <div class="th"><span v-fit="53">Statystyka</span></div>
              <div class="th"><span v-fit="43">Wartość</span></div>
            </div>
            <div class="only">
              <div class="check light" />
              <span v-fit="122">Tylko zaznaczone obiekty</span>
              <svg class="cp" viewBox="0 0 24 24" v-html="icons.copyb" />
              <svg class="rf" viewBox="0 0 24 24" v-html="icons.sync" />
              <div class="btn more">...<i /></div>
            </div>
          </section>
        </div>

        <main class="map"><canvas ref="raster" width="895" height="408" /></main>

        <section class="proc">
          <div class="dock-title"><span v-fit="123">Algorytmy Processingu</span><svg class="x" viewBox="0 0 24 24" v-html="icons.close" /></div>
          <div class="bar mini">
            <svg v-for="(it, k) in procBar" :key="k" :class="it.flag" :viewBox="it.vb" :style="{ width: it.w + 'px', marginLeft: it.gap + 'px' }" v-html="icons[it.icon]" />
          </div>
          <div class="box find"><svg viewBox="0 0 24 24" v-html="icons.mag" /><span v-fit="41">Szukaj...</span></div>
          <div class="box ptree">
            <div v-for="a in algs" :key="a[0]" class="row prow">
              <i class="tw" />
              <svg viewBox="0 0 24 24" v-html="icons[a[2] || 'qgis']" />
              <span v-fit="a[1]">{{ a[0] }}</span>
            </div>
          </div>
        </section>
      </div>

      <footer class="status">
        <div class="box locator"><svg viewBox="0 0 24 24" v-html="icons.mag" /><span v-fit="111">Szukana fraza (Ctrl+K)</span></div>
        <div class="sright">
          <span v-fit="63" class="s1">Współrzędne</span>
          <div class="box coord"><span v-fit="74">-49188,166735</span></div>
          <svg class="s2" viewBox="0 0 24 24" v-html="icons.extent" />
          <span v-fit="25" class="s3">Skala</span>
          <div class="combo s4"><span v-fit="40">1:49194</span><i class="dn" /></div>
          <svg class="s5" viewBox="0 0 24 24" v-html="icons.lock" />
          <span v-fit="63" class="s6">Powiększenie</span>
          <div class="combo s7"><span v-fit="28">100%</span><i class="ud" /></div>
          <span v-fit="52" class="s8">Kąt obrotu</span>
          <div class="combo s9"><span v-fit="25">0,0 °</span><i class="ud" /></div>
          <div class="check s10"><svg viewBox="0 0 24 24" v-html="icons.tick" /></div>
          <span v-fit="45" class="s11">Renderuj</span>
          <svg class="s12" viewBox="0 0 24 24" v-html="icons.globe" />
          <span v-fit="54" class="s13">EPSG:3763</span>
          <svg class="s14" viewBox="0 0 24 24" v-html="icons.bubble" />
        </div>
      </footer>
    </div>
  </div>
</template>

<style>
html, body { margin: 0; overflow: hidden; background: #727272; }
</style>

<style scoped>
* { box-sizing: border-box; }
.screen { display: flex; width: 1920px; height: 1080px; overflow: hidden; background: #727272; font: 12px/18px "Open Sans", "Noto Sans", sans-serif; color: #101010; }
svg { display: block; flex: none; overflow: visible; }
span { white-space: nowrap; display: inline-block; flex: none; }

.taskbar { width: 62px; height: 1080px; display: flex; flex-direction: column; background: linear-gradient(#1b1b1b 0 62%, #1a1a20 72%, #191b27 82%, #1b1b1e 90%, #1b1b1b); color: #fff; flex: none; }
.sys { height: 30px; display: flex; align-items: center; justify-content: center; }
.sys svg, .app svg { width: 16px; height: 16px; }
.apps { margin-top: 2px; }
.app { height: 31px; display: flex; align-items: center; justify-content: center; background: linear-gradient(#83e4ec, #83e4ec) 0 5px / 2px 22px no-repeat; }
.app.active { background: linear-gradient(#83e4ec, #83e4ec) 0 1px / 2px 30px no-repeat, linear-gradient(#454545, #454545) 0 1px / 62px 30px no-repeat; }
.tray { margin-top: auto; height: 208px; border-bottom: 2px solid transparent; }
.trow { height: 24px; padding: 0 9px 0 13px; display: flex; align-items: center; justify-content: space-between; }
.trow.end { justify-content: flex-end; }
.trow svg { width: 16px; height: 16px; }
.trow.end svg { width: 14px; height: 14px; }
.lang { height: 34px; display: flex; align-items: center; justify-content: center; }
.time { height: 58px; padding-top: 12px; display: flex; flex-direction: column; align-items: center; line-height: 17px; }
.msg { height: 41px; display: flex; align-items: center; justify-content: center; padding-bottom: 5px; border-bottom: 1px solid #777; }
.msg svg { width: 16px; height: 16px; }

.window { flex: 1; display: flex; flex-direction: column; min-width: 0; }
.title { height: 23px; background: #fff; display: flex; align-items: center; padding-left: 2px; color: #000; }
.title > svg { width: 16px; height: 16px; margin-right: 5px; }
.title > span { padding-top: 1px; }
.wbtns { margin-left: auto; display: flex; gap: 35px; padding: 0 19px 3px 0; }
.wbtns svg { width: 11px; height: 11px; }
.menu { height: 20px; background: #363636; color: #b4b4b4; display: flex; gap: 14px; padding-left: 10px; line-height: 22px; }
.menu :deep(u) { text-underline-offset: 2px; text-decoration-thickness: 1px; }
.toolbars { height: 118px; display: flex; flex-direction: column; gap: 1px; }
.bar { height: 38px; display: flex; align-items: center; }
.bar svg { height: 24px; }
.off { opacity: 0.3; }
.dim { opacity: 0.6; }
.framed { outline: 1px solid #f0f0f0; outline-offset: 4px; border-radius: 1px; }
.bar.mini { height: 32px; padding-bottom: 2px; }
.bar.mini svg { height: 16px; }

.body { height: 889px; display: flex; }
.left { width: 294px; display: flex; flex-direction: column; }
.dock-title { height: 16px; display: flex; justify-content: center; align-items: center; position: relative; padding-right: 26px; line-height: 16px; }
.dock-title > span { padding-top: 1px; }
.dock-title .x { position: absolute; right: 2px; top: 0; width: 11px; height: 11px; }
.proc .dock-title .x { right: 1px; }
.box { background: #b1b1b1; border: 1px solid #363636; border-radius: 3px; }
.browser { height: 246px; }
.browser .dock-title, .proc .dock-title { margin-top: 1px; }
.browser .bar.mini, .proc .bar.mini { height: 31px; }
.btree { height: 198px; padding: 1px; display: flex; flex-direction: column; }
.tree-area { flex: 1; display: flex; min-height: 0; }
.rows { flex: 1; overflow: hidden; }
.row { height: 18px; display: flex; align-items: center; }
.row svg { width: 16px; height: 16px; margin: 0 6px 0 8px; }
.rows span, .lrow span { padding-top: 2px; line-height: 16px; }
.row.l0 { padding-left: 5px; }
.row.l1 { padding-left: 21px; }
.row.l2 { padding-left: 37px; }
.row.l3 { padding-left: 53px; }
.sel { background: #f0f0f0; }
.tw { width: 6px; height: 6px; flex: none; background: #6a6a6a; clip-path: polygon(0 0, 100% 50%, 0 100%); }
.tw.open { clip-path: polygon(0 0, 100% 0, 50% 100%); }
.tw.none { visibility: hidden; }
.peek { width: 12px; height: 6px; margin: 3px 0 0 22px; border-radius: 5px 5px 0 0; background: #6689b0; }
.vscroll { width: 10px; background: #363636; padding: 136px 1px 0; margin-right: 0; }
.vscroll i { display: block; height: 25px; background: #707070; }
.hscroll { height: 10px; background: #363636; display: flex; padding: 1px 0 1px 1px; }
.hscroll i { width: 155px; background: #707070; }
.hscroll b { width: 10px; margin-left: auto; background: #b1b1b1; }

.layers { height: 419px; padding-top: 7px; }
.layers .bar.mini { height: 32px; }
.ltree { height: 365px; padding: 1px; }
.lrow { height: 22px; display: flex; align-items: center; padding-left: 7px; font-weight: 700; font-style: italic; }
.lrow.sel { font-style: normal; text-decoration: underline; font-weight: 600; }
.check { width: 16px; height: 16px; border: 1px solid #363636; border-radius: 4px; flex: none; display: flex; align-items: center; justify-content: center; }
.check svg { width: 13px; height: 13px; }
.lrow .check { margin-left: 11px; }
.lrow.sel .check { background: #b1b1b1; }
.lico { width: 16px; height: 16px; margin: 0 6px 0 7px; }

.stats { flex: 1; padding-top: 7px; }
.combo { display: flex; align-items: center; background: linear-gradient(#3a3a3a, #505050 45%, #484848); border: 1px solid #202020; border-radius: 3px; color: #b4b4b4; }
.combo > span, .find > span, .status span { padding-top: 2px; line-height: 16px; }
.dn { width: 6px; height: 6px; background: #c8c8c8; clip-path: polygon(0 0, 100% 0, 50% 100%); margin-left: auto; }
.ud { width: 6px; height: 11px; background: #bbb; margin-left: auto; clip-path: polygon(50% 0, 100% 40%, 0 40%, 0 60%, 100% 60%, 50% 100%, 0 60%, 0 40%); }
.stats .dock-title { height: 17px; }
.c1 { height: 24px; padding: 0 5px 0 5px; }
.c1 svg { width: 15px; height: 15px; margin-right: 5px; }
.crow { display: flex; justify-content: space-between; margin-top: 3px; height: 25px; }
.c2 { width: 263px; padding: 0 5px 0 4px; }
.c2 em { font: 700 9px "DejaVu Sans", sans-serif; color: #606060; }
.btn { background: linear-gradient(#9b9b9b, #828282); border: 1px solid #363636; border-radius: 3px; display: flex; align-items: center; justify-content: center; }
.eps { width: 25px; font: 700 19px "DejaVu Serif", serif; color: #6e3f80; padding-bottom: 3px; }
.table { height: 118px; margin-top: 3px; padding: 2px; display: flex; }
.th { width: 100px; height: 20px; background: #727272; border-bottom: 1px solid #363636; text-align: center; line-height: 18px; }
.th:first-child { border-right: 1px solid #363636; }
.only { height: 29px; display: flex; align-items: center; padding: 1px 0 0 1px; }
.light { background: #b1b1b1; }
.only span { margin-left: 7px; padding-top: 1px; }
.cp { width: 13px; height: 13px; margin-left: 73px; }
.rf { width: 15px; height: 15px; margin-left: 14px; }
.more { width: 24px; height: 22px; margin-left: auto; line-height: 20px; }
.more i { width: 7px; height: 5px; background: #333; clip-path: polygon(0 0, 100% 0, 50% 100%); margin-top: 6px; }

.map { width: 1254px; margin: -1px 0 0 6px; height: 890px; background: #fff; border: 1px solid #565656; border-left-color: #666; padding: 240px 0 0 179px; }
.map canvas { display: block; width: 895px; height: 408px; image-rendering: pixelated; }

.proc { width: 298px; margin-left: 6px; }
.find { height: 22px; display: flex; align-items: center; color: #606060; padding-left: 8px; }
.find svg, .locator svg { width: 14px; height: 14px; margin-right: 7px; }
.ptree { height: 819px; padding: 2px 0 0 8px; }
.prow .tw { margin-left: 0; }
.prow svg { width: 15px; height: 15px; margin: 0 7px 0 10px; }

.status { flex: 1; display: flex; justify-content: space-between; }
.locator { width: 200px; height: 22px; margin: 4px 0 0 4px; display: flex; align-items: center; padding-left: 8px; color: #606060; }
.sright { width: 855px; height: 22px; margin-top: 4px; display: flex; align-items: center; }
.coord { width: 88px; height: 22px; margin-left: 4px; display: flex; align-items: center; justify-content: center; line-height: 20px; }
.s2 { width: 15px; height: 15px; margin-left: 5px; }
.s3 { margin-left: 13px; }
.s4 { width: 98px; height: 22px; margin-left: 4px; padding: 0 5px 0 6px; }
.s5 { width: 13px; height: 15px; margin-left: 11px; }
.s6 { margin-left: 9px; }
.s7 { width: 83px; height: 22px; margin-left: 4px; padding: 0 5px 0 4px; }
.s8 { margin-left: 9px; }
.s9 { width: 83px; height: 22px; margin-left: 10px; padding: 0 5px 0 3px; }
.s10 { margin-left: 7px; background: #b1b1b1; }
.s11 { margin-left: 6px; }
.s12 { width: 13px; height: 13px; margin-left: 12px; }
.s13 { margin-left: 4px; }
.s14 { width: 15px; height: 15px; margin-left: 22px; }
</style>
